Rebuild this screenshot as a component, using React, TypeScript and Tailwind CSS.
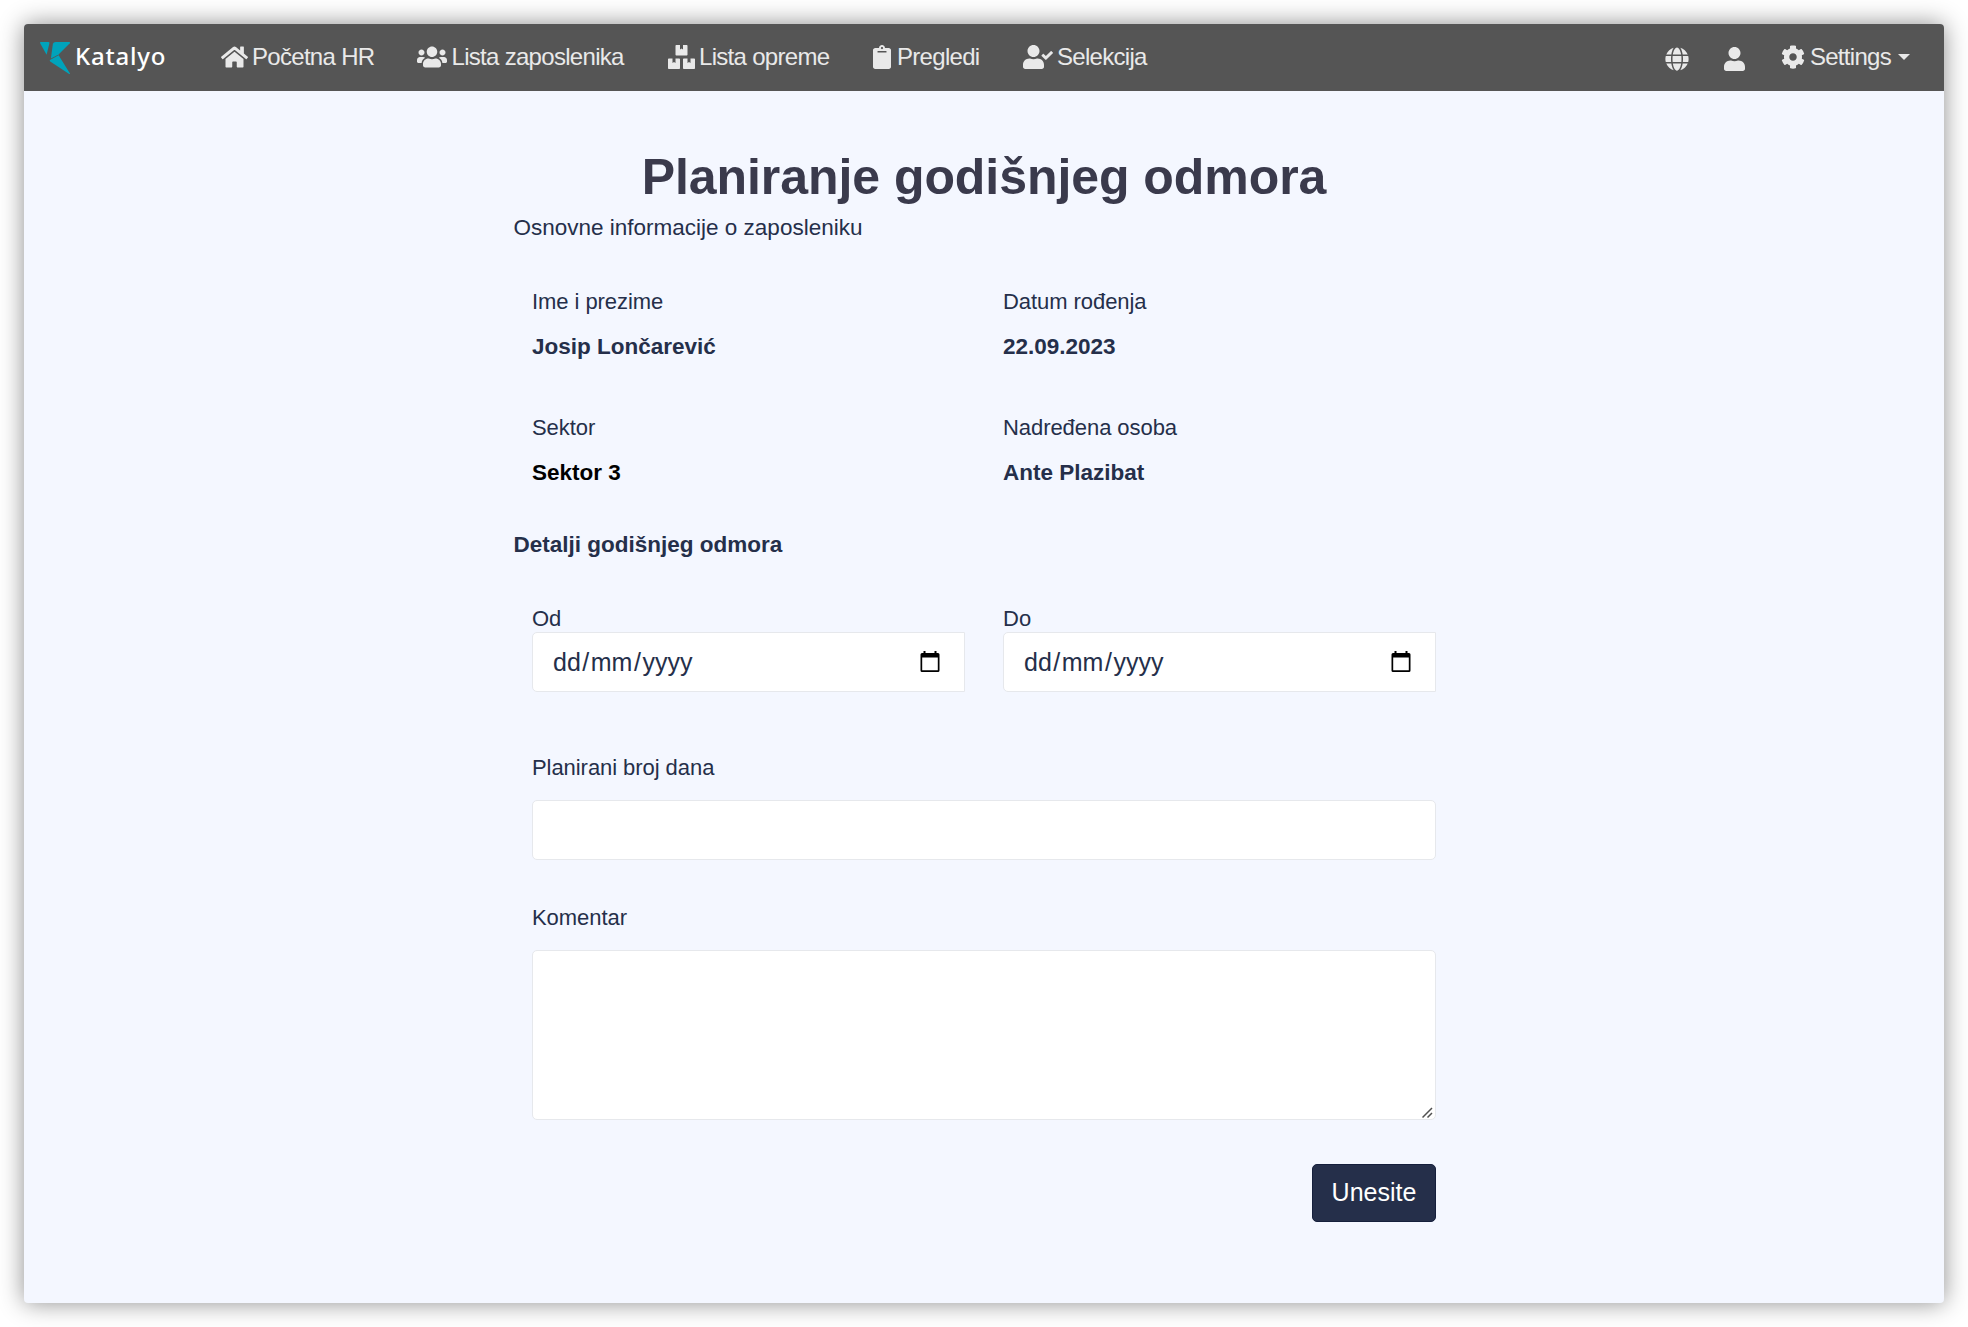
import React from "react";
import { FaHome, FaUsers, FaBoxes, FaClipboard, FaUserCheck, FaGlobe, FaUser, FaCog } from "react-icons/fa";

function Logo() {
  return (
    <a className="mt-[2px] flex h-8 w-[128px] items-start">
      <svg width="31" height="33" viewBox="0 0 31 33" className="shrink-0" fill="#00a3bb">
        <path d="M0.6 0H8.4Q9.6 0 9.4 1.2L6.6 12.8L0.3 1.4Q-0.4 0 0.6 0Z" />
        <path d="M15.6 0H29.4Q30.7 0.2 29.8 1.2L18.6 12.4L10.9 16.6L12.9 1.8Q13.4 0 15.6 0Z" />
        <path d="M18.6 13.2L30 31.4Q30.2 32.6 28.8 31.8L10.2 19.6Q9 18.4 10.4 17.7Z" />
      </svg>
      <span className="ml-[4px] -mt-[3px] font-['Noto_Sans'] text-[24px] leading-[34px] font-medium tracking-[0.8px] text-white">Katalyo</span>
    </a>
  );
}

function NavItem({ icon, label, className }: { icon: React.ReactNode; label: string; className: string }) {
  return (
    <a className={"flex items-center whitespace-nowrap " + className}>
      {icon}
      <span>{label}</span>
    </a>
  );
}

function Navbar() {
  return (
    <nav className="flex h-[67px] shrink-0 items-center bg-[#555555] pb-[2px] pl-4 pr-[34px] text-[24px] leading-[36px] tracking-[-0.7px] text-[#e9e9e9]">
      <Logo />
      <NavItem className="ml-[53px] w-[196px] gap-[4px]" icon={<FaHome className="h-6 w-[27px]" />} label="Početna HR" />
      <NavItem className="w-[251px] gap-[4.5px]" icon={<FaUsers className="h-6 w-[30px]" />} label="Lista zaposlenika" />
      <NavItem className="w-[205px] gap-[4px]" icon={<FaBoxes className="h-6 w-[27px]" />} label="Lista opreme" />
      <NavItem className="w-[150px] gap-[6px]" icon={<FaClipboard className="h-6 w-[18px]" />} label="Pregledi" />
      <NavItem className="gap-[4px]" icon={<FaUserCheck className="h-6 w-[30px]" />} label="Selekcija" />
      <div className="ml-auto flex items-center">
        <FaGlobe className="mt-[4px] size-6" />
        <FaUser className="mt-[4px] ml-[35px] h-6 w-[21px]" />
        <FaCog className="ml-[36px] size-6" />
        <span className="ml-[5px]">Settings</span>
        <span className="ml-[7px] border-x-[6px] border-t-[6px] border-x-transparent border-t-[#e9e9e9]" />
      </div>
    </nav>
  );
}

function Info({ label, value, dark }: { label: string; value: string; dark?: boolean }) {
  return (
    <div className="flex flex-col">
      <div className="text-[22px] leading-[34px] tracking-[-0.06px]">{label}</div>
      <div className={dark ? "mt-[11px] mb-px text-[22.5px] leading-[34px] font-bold text-black" : "mt-[11px] mb-px text-[22.5px] leading-[34px] font-bold"}>{value}</div>
    </div>
  );
}

function DateField({ label }: { label: string }) {
  return (
    <div>
      <div className="pt-px text-[22px] leading-[27px]">{label}</div>
      <div className="flex h-[60px] items-center justify-between rounded-l-[5px] border border-[#e6e8ec] bg-white pl-5 pr-6 text-[25px] leading-[36px]">
        <div className="flex">
          <span>dd</span>
          <span className="px-[1.5px]">/</span>
          <span>mm</span>
          <span className="px-[1.5px]">/</span>
          <span>yyyy</span>
        </div>
        <svg width="20" height="22" viewBox="0 0 20 22" fill="none">
          <path d="M3.5 0H5.5V3H3.5ZM14.5 0H16.5V3H14.5Z" fill="#000" />
          <path d="M2 2H18Q19.5 2 19.5 3.5V19.5Q19.5 21 18 21H2Q0.5 21 0.5 19.5V3.5Q0.5 2 2 2ZM2.2 6.5V19.3H17.8V6.5Z" fill="#000" fillRule="evenodd" />
        </svg>
      </div>
    </div>
  );
}

export default function App() {
  return (
    <div className="h-[1327px] w-[1968px] overflow-hidden bg-white p-6 font-['Liberation_Sans',Arial,sans-serif]">
      <div className="flex h-[1279px] w-[1920px] flex-col overflow-hidden rounded-[4px] bg-[#f4f7ff] text-[#252f4a] shadow-[0_0_24px_rgba(0,0,0,0.45)]">
        <Navbar />
        <main className="mx-auto w-[942px] pt-[56px]">
          <h1 className="text-center text-[50px] leading-[60px] font-bold tracking-[-0.06px] whitespace-nowrap text-[#3a3a4c]">Planiranje godišnjeg odmora</h1>
          <p className="mt-1 pl-[0.5px] text-[22.5px] leading-[34px]">Osnovne informacije o zaposleniku</p>
          <div className="mt-10 grid grid-cols-2 gap-x-[38px] gap-y-[46px] px-[19px]">
            <Info label="Ime i prezime" value="Josip Lončarević" />
            <Info label="Datum rođenja" value="22.09.2023" />
            <Info label="Sektor" value="Sektor 3" dark />
            <Info label="Nadređena osoba" value="Ante Plazibat" />
          </div>
          <h2 className="mt-[37px] pl-[0.5px] text-[22.5px] leading-[34px] font-bold">Detalji godišnjeg odmora</h2>
          <form className="mt-[42px] px-[19px]">
            <div className="grid grid-cols-2 gap-x-[38px]">
              <DateField label="Od" />
              <DateField label="Do" />
            </div>
            <label className="mt-[59px] block text-[22px] leading-[34px] tracking-[-0.06px]">Planirani broj dana</label>
            <input className="mt-[15px] block h-[60px] w-full rounded-[5px] border border-[#e6e8ec] bg-white px-5 text-[25px] outline-none" />
            <label className="mt-[41px] block text-[22px] leading-[34px] tracking-[-0.06px]">Komentar</label>
            <div className="mt-[15px] flex h-[170px] items-end justify-end rounded-[5px] border border-[#e6e8ec] bg-white">
              <svg width="12" height="12" viewBox="0 0 12 12" stroke="#505050" strokeWidth="1.5" className="mr-px">
                <path d="M0.5 10.5L10 1M5.5 10.5L10 6" />
              </svg>
            </div>
            <div className="mt-11 flex justify-end">
              <button type="button" className="h-[58px] w-[124px] rounded-[5px] border border-[#151f3c] bg-[#252f4a] pb-[2px] text-[25px] leading-[36px] text-white">
                Unesite
              </button>
            </div>
          </form>
        </main>
      </div>
    </div>
  );
}
